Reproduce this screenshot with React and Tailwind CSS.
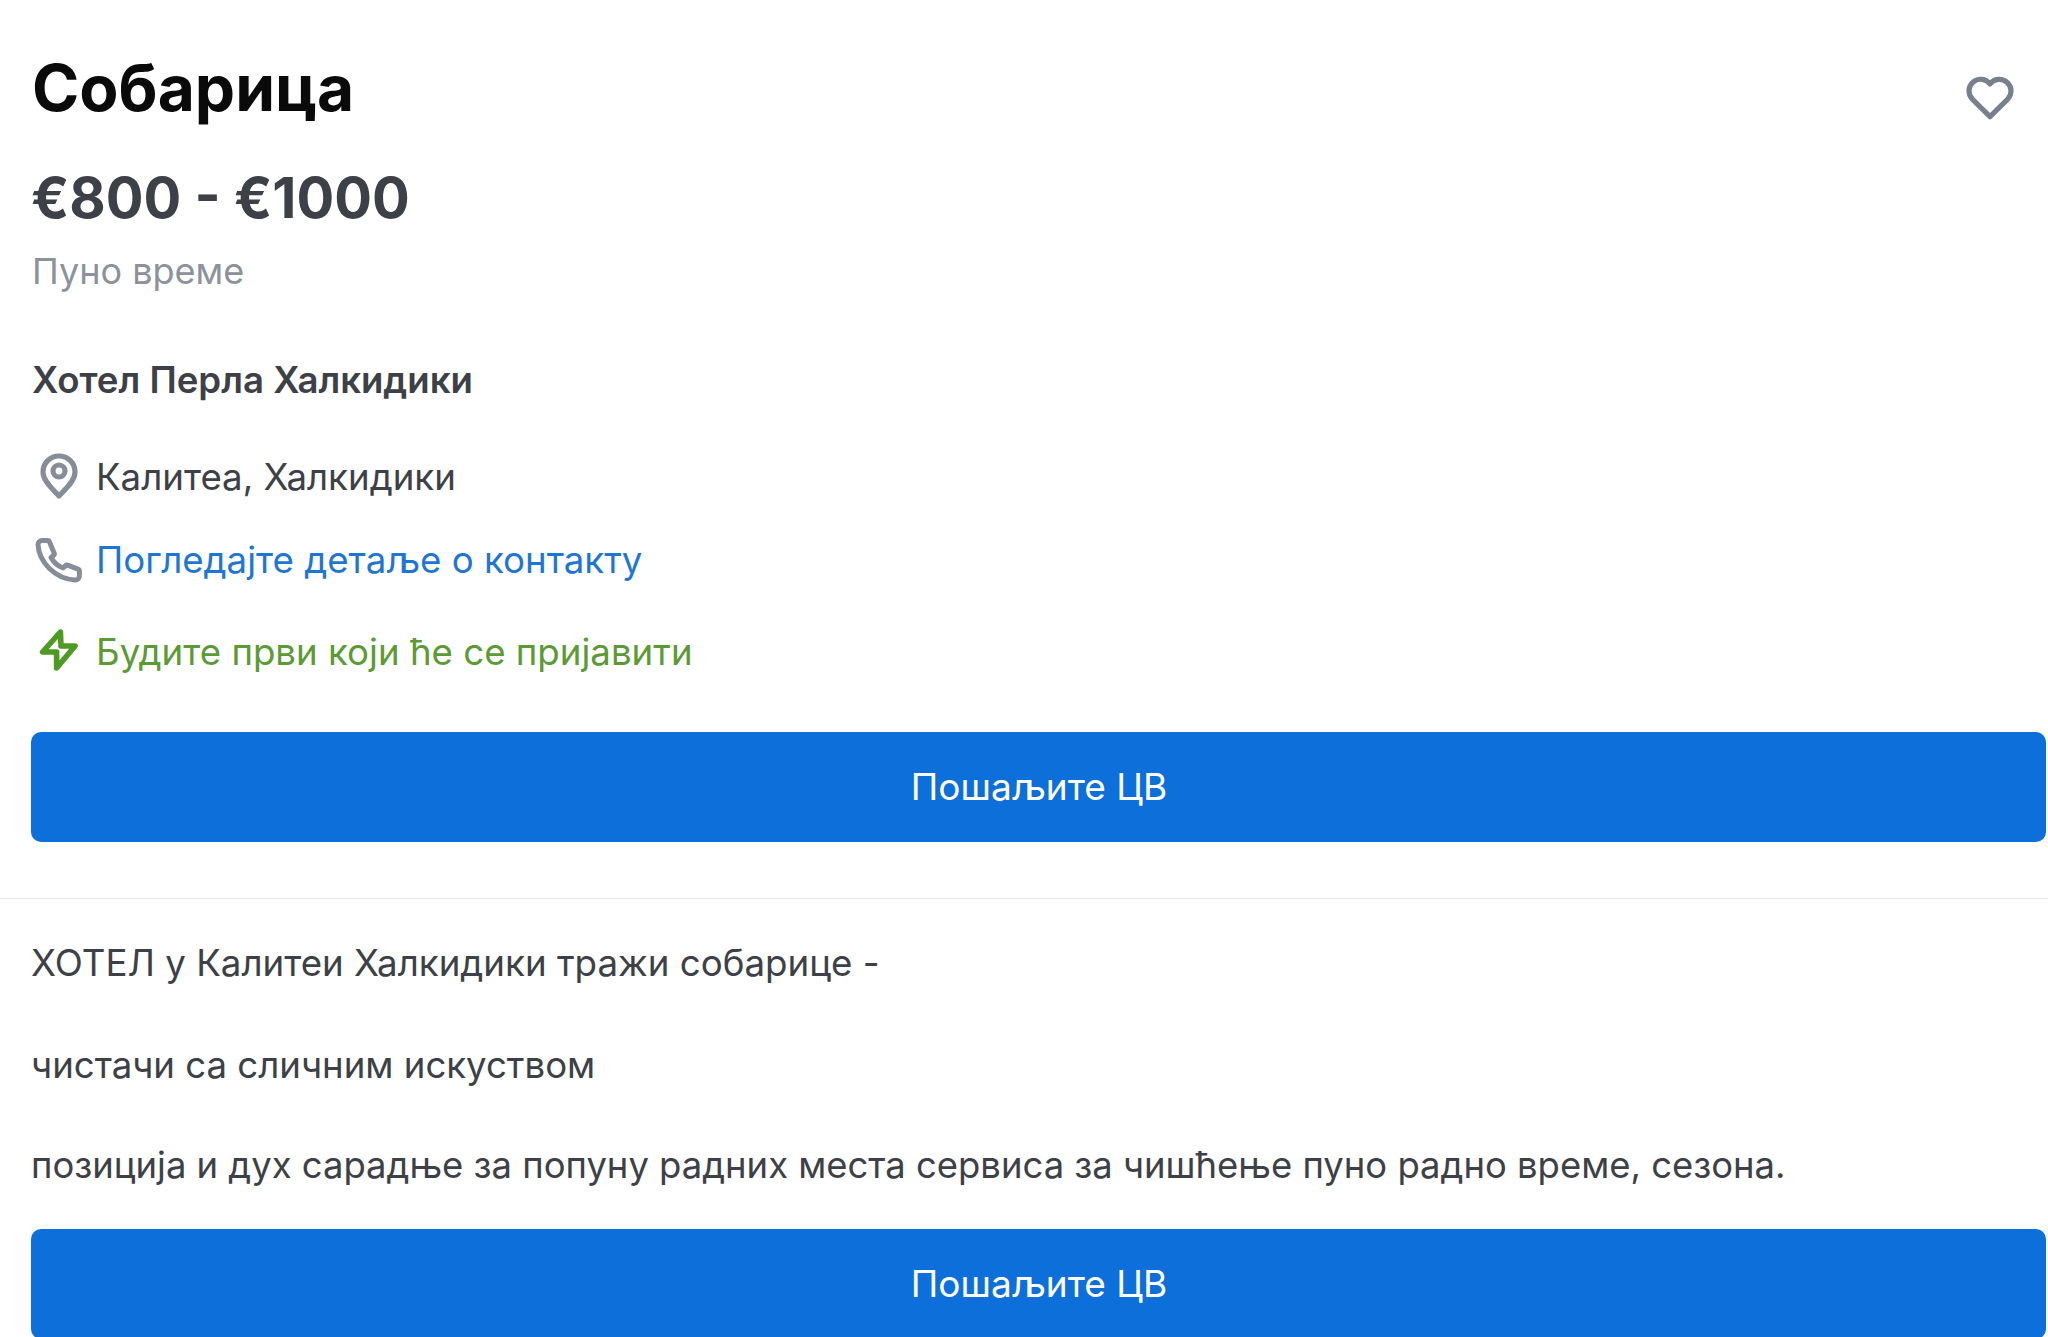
import React from 'react';
import { TbHeart } from 'react-icons/tb';

const PinIcon = () => (
  <svg viewBox="0 0 24 24" fill="none" stroke="currentColor" strokeWidth="2.6" strokeLinejoin="round" className="h-[48px] w-[48px] text-[#878d97]">
    <path d="M12 21.5C10 19 4 14.5 4 9.5a8 8 0 0 1 16 0C20 14.5 14 19 12 21.5Z" />
    <circle cx="12" cy="9" r="3" />
  </svg>
);

const PhoneIcon = () => (
  <svg viewBox="0 0 24 24" fill="none" stroke="currentColor" strokeWidth="2.5" strokeLinejoin="round" className="h-[48px] w-[48px] text-[#878d97]">
    <path d="M3.5 2.3H6.3a1 1 0 0 1 .95.7L9.6 8.6a1 1 0 0 1-.4 1.2L8 10.7C9.3 13 11.5 15 14 16l1.3-1.2a1 1 0 0 1 1-.2l5.2 2a1 1 0 0 1 .7 1V20a2 2 0 0 1-2 2C10 21.5 2 13 1.5 4.3a2 2 0 0 1 2-2Z" />
  </svg>
);

const BoltIcon = () => (
  <svg viewBox="0 0 24 24" fill="none" stroke="currentColor" strokeWidth="2.8" strokeLinejoin="round" className="h-[48px] w-[48px] text-[#4f9a24]">
    <path d="M12.7 2 3.8 12h7v8L20 9h-7Z" />
  </svg>
);

const ApplyButton = () => (
  <button className="flex h-[110px] w-full shrink-0 items-center justify-center rounded-[10px] bg-[#0d6fd9] pl-[1px] text-[37px] text-white">
    Пошаљите ЦВ
  </button>
);

const InfoRow = ({ icon, className, children }) => (
  <div className={`flex h-[48px] items-center gap-[9px] text-[36.65px] leading-[48px] ${className}`}>
    <div className="flex w-[56px] justify-center">{icon}</div>
    {children}
  </div>
);

export default function App() {
  return (
    <div className="h-[1337px] overflow-hidden bg-white font-['Inter',sans-serif]">
      <div className="pl-[31px] pr-[2px]">
        <div className="flex items-start justify-between pt-[50px]">
          <h1 className="ml-[1px] text-[64px] font-bold leading-[76px] text-[#0a0a0a]">Собарица</h1>
          <TbHeart className="mr-[28px] mt-[20px] h-[56px] w-[56px] text-[#78808c]" strokeWidth={2.2} />
        </div>
        <div className="mt-[38px] text-[56px] font-bold leading-[68px] text-[#3d4147]">€800 - €1000</div>
        <div className="mt-[15px] ml-[1px] text-[36px] leading-[48px] text-[#8c929c]">Пуно време</div>
        <div className="mt-[61px] ml-[1px] text-[36.6px] font-semibold leading-[48px] text-[#3d4147]">Хотел Перла Халкидики</div>
        <div className="mt-[49px] flex flex-col">
          <InfoRow className="text-[#3d4147]" icon={<PinIcon />}>
            Калитеа, Халкидики
          </InfoRow>
          <InfoRow className="mt-[35px] text-[#1f76d2]" icon={<PhoneIcon />}>
            Погледајте детаље о контакту
          </InfoRow>
          <InfoRow className="mt-[44px] text-[#5c9a35]" icon={<BoltIcon />}>
            Будите први који ће се пријавити
          </InfoRow>
        </div>
        <div className="mt-[56px]">
          <ApplyButton />
        </div>
      </div>
      <div className="mt-[56px] border-t border-[#e6e8eb]"></div>
      <div className="pl-[31px] pr-[2px] text-[36.7px] leading-[48px] text-[#3d4147]">
        <p className="mt-[40px]">ХОТЕЛ у Калитеи Халкидики тражи собарице -</p>
        <p className="mt-[54px] text-[36.6px]">чистачи са сличним искуством</p>
        <p className="mt-[52px] text-[36.43px]">позиција и дух сарадње за попуну радних места сервиса за чишћење пуно радно време, сезона.</p>
        <div className="mt-[40px]">
          <ApplyButton />
        </div>
      </div>
    </div>
  );
}
